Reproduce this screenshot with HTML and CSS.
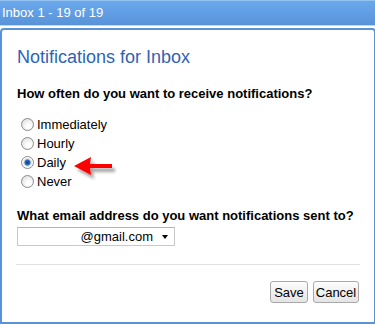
FILE: index.html
```html
<!DOCTYPE html>
<html lang="en">
<head>
  <meta charset="UTF-8" />
  <title>Notifications for Inbox</title>
  <link rel="stylesheet" href="styles.css">
</head>
<body>

  <!-- top bar -->
  <div class="topbar">Inbox 1 - 19 of 19</div>

  <!-- settings panel -->
  <div class="panel">
    <h1>Notifications for Inbox</h1>

    <p class="question">How often do you want to receive notifications?</p>
    <div class="choices">
      <label class="choice"><input type="radio" name="freq"> Immediately</label>
      <label class="choice"><input type="radio" name="freq"> Hourly</label>
      <label class="choice daily"><input type="radio" name="freq" checked> Daily
        <svg class="arrow" width="50" height="30" viewBox="0 0 50 30">
          <defs>
            <filter id="shadow" x="-20%" y="-30%" width="160%" height="190%">
              <feDropShadow dx="3" dy="4" stdDeviation="1.6" flood-color="#000" flood-opacity="0.35"/>
            </filter>
          </defs>
          <path d="M2 12 L19 3 L18 10 L40 10 L40 14 L18 14 L19 21 Z" fill="#f00" filter="url(#shadow)"/>
        </svg>
      </label>
      <label class="choice"><input type="radio" name="freq"> Never</label>
    </div>

    <p class="question email-q">What email address do you want notifications sent to?</p>
    <div class="select">
      <span>@gmail.com</span>
      <span class="caret"></span>
    </div>

    <hr>

    <div class="actions">
      <button class="btn save">Save</button>
      <button class="btn cancel">Cancel</button>
    </div>
  </div>

</body>
</html>
```

FILE: styles.css
```css
body {
  margin: 0;
  background: #fff;
  font-family: "Liberation Sans", Arial, sans-serif;
  font-size: 13px;
  color: #000;
}

.topbar {
  height: 24px;
  line-height: 24px;
  padding-left: 2px;
  color: #fff;
  background: linear-gradient(#6aa8ec, #5893da);
  border-top: 1px solid #93c1f0;
  border-bottom: 1px solid #bcd7f3;
  margin-bottom: 2px;
}

.panel {
  width: 344px;
  height: 276px;
  border: 2px solid #5b91d8;
  border-radius: 4px 4px 0 0;
  padding: 16px 14px 0 14px;
}

h1 {
  margin: 0;
  font-size: 18px;
  font-weight: normal;
  line-height: 22px;
  color: #2f63b5;
  padding-left: 1px;
}

.question {
  margin: 18px 0 0 1px;
  font-weight: bold;
  line-height: 16px;
}

.choices {
  margin-top: 13px;
  padding-left: 5px;
}

.choice {
  display: flex;
  align-items: center;
  height: 19px;
  position: relative;
}

.choice input {
  appearance: none;
  -webkit-appearance: none;
  width: 13px;
  height: 13px;
  margin: 0 3px 0 0;
  border: 1px solid #8b8b8b;
  border-radius: 50%;
  background: radial-gradient(circle at 60% 65%, #fff 20%, #d6d6d6 100%);
  box-sizing: border-box;
}

.choice input:checked {
  background: radial-gradient(circle, #0f3f7a 0, #2d6db8 2.5px, #cfd8e4 3.5px, #fff 5px);
}

.arrow {
  position: absolute;
  left: 51px;
  top: 1px;
}

.email-q {
  margin-top: 17px;
}

.select {
  width: 150px;
  height: 17px;
  margin-top: 3px;
  margin-left: 1px;
  border: 1px solid #c9c9c9;
  border-top-color: #b5b5b5;
  display: flex;
  align-items: center;
  justify-content: flex-end;
  padding-right: 6px;
}

.caret {
  width: 0;
  height: 0;
  margin-left: 9px;
  border-left: 3.5px solid transparent;
  border-right: 3.5px solid transparent;
  border-top: 4px solid #000;
}

hr {
  margin: 18px 0 0 0;
  border: 0;
  border-top: 1px solid #e1e1e1;
}

.actions {
  display: flex;
  justify-content: flex-end;
  gap: 5px;
  margin-top: 16px;
  padding-right: 1px;
}

.btn {
  height: 22px;
  padding: 0;
  font-family: "Liberation Sans", Arial, sans-serif;
  font-size: 13px;
  color: #000;
  border: 1px solid #a9a9a9;
  border-radius: 3px;
  background: linear-gradient(#fdfdfd, #e4e4e4);
}

.save {
  width: 38px;
}

.cancel {
  width: 46px;
}
```
